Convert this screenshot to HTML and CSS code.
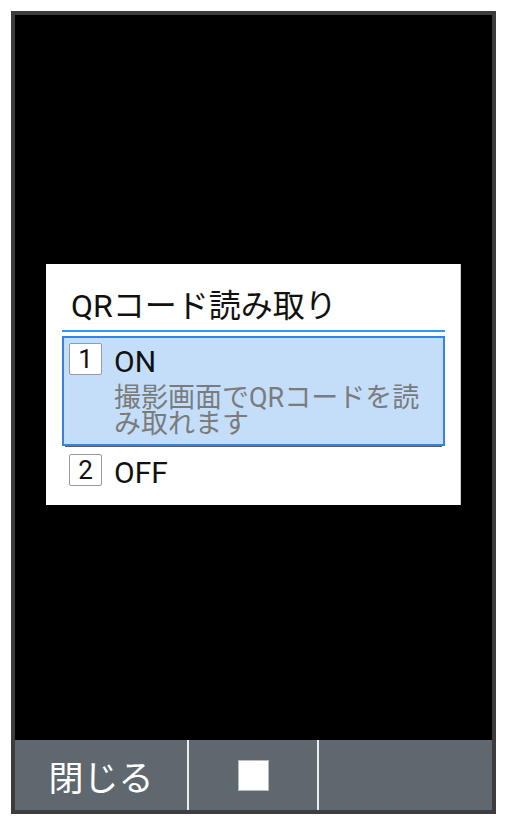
FILE: index.html
```html
<!DOCTYPE html>
<html lang="ja">
<head>
<meta charset="utf-8">
<link rel="stylesheet" href="styles.css">
</head>
<body>
<div class="phone">
  <div class="screen">
    <div class="dialog">
      <div class="dialog-title">QRコード読み取り</div>
      <div class="dialog-rule"></div>
      <div class="item item-selected">
        <span class="badge">1</span>
        <span class="item-label">ON</span>
        <span class="item-desc">撮影画面でQRコードを読み取れます</span>
      </div>
      <div class="item-sep"></div>
      <div class="item">
        <span class="badge">2</span>
        <span class="item-label">OFF</span>
      </div>
    </div>
  </div>
  <div class="softkeys">
    <div class="key key-side">閉じる</div>
    <div class="key key-mid"><span class="stop"></span></div>
    <div class="key key-side"></div>
  </div>
</div>
</body>
</html>
```
FILE: styles.css
```css
html, body {
  margin: 0;
  padding: 0;
  background: #ffffff;
}
body {
  font-family: Roboto, "Noto Sans CJK JP", sans-serif;
}
.phone {
  margin: 11px 0 0 11px;
  width: 485px;
  height: 803px;
  box-sizing: border-box;
  border: 4px solid #3d3d3d;
  background: #000;
  display: flex;
  flex-direction: column;
}
.screen {
  flex: 1;
  display: flex;
  justify-content: center;
  align-items: flex-start;
  padding-top: 249px;
}
.dialog {
  width: 415px;
  box-sizing: border-box;
  background: #fff;
  border-right: 1px solid #cfcfcf;
  padding: 0 15px 11px 16px;
}
.dialog-title {
  padding: 26px 0 8px 9px;
  font-size: 32px;
  line-height: 32px;
  color: #111;
  white-space: nowrap;
}
.dialog-rule {
  height: 2px;
  background: #2f95f0;
  margin-bottom: 4px;
}
.item {
  display: grid;
  grid-template-columns: 33px 1fr;
  column-gap: 12px;
  padding: 5px 5px 6px 5px;
  border: 2px solid transparent;
}
.item-selected {
  background: #c4defa;
  border-color: #3484e6;
  padding-bottom: 7px;
}
.badge {
  grid-column: 1;
  grid-row: 1;
  box-sizing: border-box;
  width: 33px;
  height: 32px;
  border: 1px solid #9a9a9a;
  border-radius: 2px;
  background: #fff;
  color: #111;
  font-size: 26px;
  line-height: 30px;
  text-align: center;
}
.item-label {
  grid-column: 2;
  grid-row: 1;
  box-sizing: border-box;
  height: 32px;
  font-size: 30px;
  line-height: 32px;
  padding-top: 3px;
  color: #111;
}
.item-desc {
  grid-column: 2;
  grid-row: 2;
  margin-top: 10px;
  font-size: 27px;
  line-height: 26px;
  color: #7b7b7b;
  padding-right: 10px;
}
.item-sep {
  height: 1px;
  background: #5a5a5a;
  margin: 0 3px;
}
.softkeys {
  height: 70px;
  display: flex;
  background: #5f686e;
}
.key {
  display: flex;
  align-items: center;
  justify-content: center;
  color: #fff;
  font-size: 35px;
  font-family: "Noto Sans CJK JP", sans-serif;
}
.key-side {
  width: 172px;
}
.key-mid {
  width: 128px;
  border-left: 2px solid #ececec;
  border-right: 2px solid #ececec;
}
.stop {
  width: 29px;
  height: 29px;
  background: #fff;
  box-shadow: 0 0 0 1px #b8bcbf;
}
```
